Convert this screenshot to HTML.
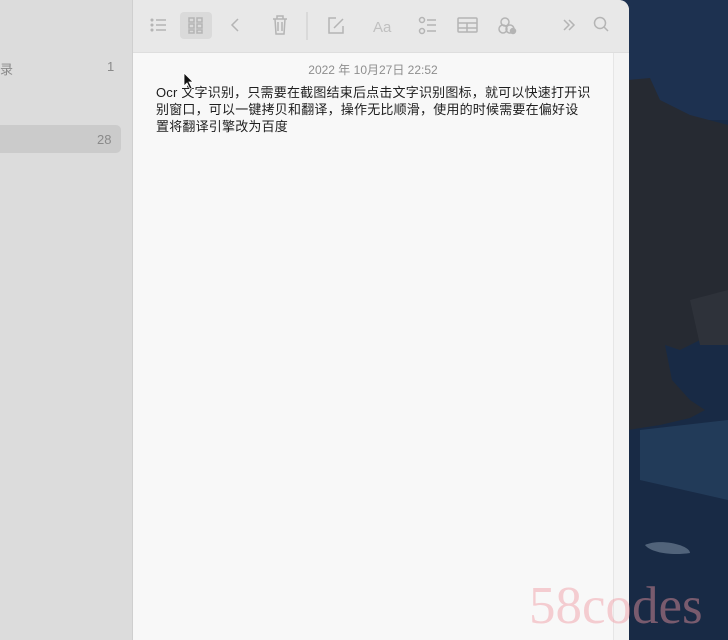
<!DOCTYPE html>
<html><head><meta charset="utf-8"><style>
body{margin:0;width:728px;height:640px;overflow:hidden;position:relative;font-family:"Liberation Sans","Noto Sans CJK SC",sans-serif;background:#1a2c48}
#bg{position:absolute;left:0;top:0}
#side{position:absolute;left:0;top:0;width:132px;height:640px;background:#dcdcdc;border-right:1px solid #cfcfcf}
#win{position:absolute;left:133px;top:0;width:496px;height:640px;background:#f8f8f8;border-top-right-radius:10px;overflow:hidden}
#tb{position:absolute;left:0;top:0;width:496px;height:52px;background:#e8e8e8;border-bottom:1px solid #dedede}
#strip{position:absolute;left:480px;top:53px;width:16px;height:587px;background:#f4f4f4;border-left:1px solid #e6e6e6}
.t{position:absolute;color:#8a8a8a;font-size:13px}
</style></head><body>
<svg id="bg" width="728" height="640">
<rect width="728" height="640" fill="#182a45"/>
<rect y="0" width="728" height="120" fill="#1d3150"/>
<path d="M628 80 L650 78 L660 100 L690 115 L728 125 L728 300 L700 300 L710 320 L700 340 L680 350 L665 345 L672 380 L690 400 L705 410 L690 418 L660 425 L628 430 Z" fill="#262a32"/>
<path d="M690 300 L728 290 L728 345 L700 345 Z" fill="#2e323a"/>
<path d="M640 430 L728 420 L728 500 L640 480 Z" fill="#2a4868" opacity="0.6"/>
<path d="M645 545 C660 538 690 545 690 553 C670 556 650 552 645 545Z" fill="#8a9bb0" opacity="0.5"/>
</svg>
<div id="side">
<div class="t" style="left:0;top:59px">录</div>
<div class="t" style="left:107px;top:59px">1</div>
<div style="position:absolute;left:0;top:125px;width:121px;height:28px;background:#cbcbcb;border-radius:0 5px 5px 0"></div>
<div class="t" style="left:97px;top:132px">28</div>
</div>
<div id="win">
<div id="tb">
<svg width="496" height="52" fill="none" stroke="#b4b4b4" stroke-width="1.5">
<g><line x1="23" y1="20" x2="33" y2="20"/><line x1="23" y1="25" x2="33" y2="25"/><line x1="23" y1="30" x2="33" y2="30"/><circle cx="19" cy="20" r=".8"/><circle cx="19" cy="25" r=".8"/><circle cx="19" cy="30" r=".8"/></g>
<rect x="47" y="12" width="32" height="27" rx="4" fill="#dadada" stroke="none"/>
<g><rect x="56" y="18" width="5" height="4"/><rect x="64" y="18" width="5" height="4"/><rect x="56" y="24" width="5" height="4"/><rect x="64" y="24" width="5" height="4"/><rect x="56" y="30" width="5" height="3"/><rect x="64" y="30" width="5" height="3"/></g>
<path d="M105 19 L99 25 L105 31"/>
<path d="M140 19 H154 M144 19 V16 H150 V19 M142 19 L143 34 H151 L152 19 M145 22 V31 M149 22 V31"/>
<line x1="174" y1="12" x2="174" y2="40" stroke="#d4d4d4"/>
<path d="M203 18 H196 V33 H210 V26 M201 28 L210 19"/>
<text x="240" y="32" fill="#c0c0c0" stroke="none" font-size="15" font-family="Liberation Sans">Aa</text>
<g><circle cx="289" cy="20" r="2.5"/><circle cx="289" cy="31" r="2.5"/><line x1="294" y1="20" x2="303" y2="20"/><line x1="294" y1="25" x2="303" y2="25"/><line x1="294" y1="31" x2="303" y2="31"/></g>
<g><rect x="325" y="18" width="19" height="14" rx="1"/><line x1="325" y1="23" x2="344" y2="23"/><line x1="325" y1="28" x2="344" y2="28"/><line x1="334" y1="23" x2="334" y2="32"/></g>
<g><circle cx="372" cy="22" r="4"/><circle cx="370" cy="29" r="4"/><circle cx="377" cy="29" r="4"/><circle cx="380" cy="31" r="2.5" fill="#b4b4b4"/></g>
<path d="M431 20 L436 25 L431 30 M436 20 L441 25 L436 30"/>
<circle cx="467" cy="23" r="5.5"/><line x1="471" y1="27" x2="475" y2="31"/>
</svg>
</div>
<div style="position:absolute;left:0;top:61px;width:480px;text-align:center;font-size:12px;color:#8e8e8e">2022 年 10月27日 22:52</div>
<div style="position:absolute;left:23px;top:84px;white-space:nowrap;letter-spacing:0.2px;font-size:13px;line-height:17px;color:#1e1e1e">Ocr 文字识别，只需要在截图结束后点击文字识别图标，就可以快速打开识<br>别窗口，可以一键拷贝和翻译，操作无比顺滑，使用的时候需要在偏好设<br>置将翻译引擎改为百度</div>
<div id="strip"></div>
</div>
<svg style="position:absolute;left:183px;top:72px" width="12" height="18"><path d="M1 1 L1 14 L4 11 L7 17 L9 16 L6 10 L10 10 Z" fill="#111" stroke="#fff" stroke-width="0.8"/></svg>
<div style="position:absolute;left:529px;top:576px;font-family:'Liberation Serif',serif;font-size:53px;line-height:60px;color:rgba(240,150,160,.45)">58codes</div>
</body></html>
